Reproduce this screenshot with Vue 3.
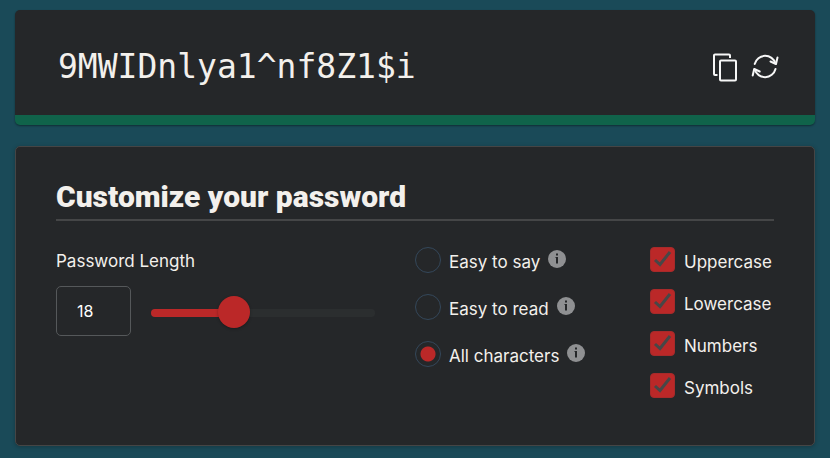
<script setup>
import { computed, ref } from 'vue'

const password = ref('9MWIDnlya1^nf8Z1$i')
const min = 1
const max = 50
const length = ref(18)
const mode = ref('all')

const modes = [
  { id: 'say', label: 'Easy to say' },
  { id: 'read', label: 'Easy to read' },
  { id: 'all', label: 'All characters' },
]

const sets = ref([
  { id: 'upper', label: 'Uppercase', on: true, chars: 'ABCDEFGHIJKLMNOPQRSTUVWXYZ' },
  { id: 'lower', label: 'Lowercase', on: true, chars: 'abcdefghijklmnopqrstuvwxyz' },
  { id: 'numbers', label: 'Numbers', on: true, chars: '0123456789' },
  { id: 'symbols', label: 'Symbols', on: true, chars: '!@#$%^&*' },
])

const fill = computed(() => `${((length.value - min) / (max - min)) * 100}%`)

function generate() {
  const pool = sets.value.filter((s) => s.on).map((s) => s.chars).join('')
  if (!pool) return
  const picks = crypto.getRandomValues(new Uint32Array(Number(length.value)))
  password.value = Array.from(picks, (n) => pool[n % pool.length]).join('')
}

function copy() {
  navigator.clipboard?.writeText(password.value)
}
</script>

<template>
  <main class="page">
    <section class="result">
      <output class="password">{{ password }}</output>
      <div class="actions">
        <button type="button" class="action" aria-label="Copy password" @click="copy">
          <svg viewBox="0 0 28 30" width="28" height="30" fill="none" stroke="currentColor" stroke-width="2" stroke-linejoin="round">
            <path d="M5.500 23H3a1 1 0 0 1-1-1V3.500a1 1 0 0 1 1-1h14a1 1 0 0 1 1 1V6" />
            <rect x="8" y="8.500" width="16" height="20" rx="1" />
          </svg>
        </button>
        <button type="button" class="action" aria-label="Generate password" @click="generate">
          <svg viewBox="0 0 28 30" width="28" height="30" fill="none" stroke="currentColor" stroke-width="2" stroke-linejoin="round" stroke-linecap="round">
            <path d="M3.700 12A10.800 10.800 0 0 1 24.500 11.500" />
            <path d="M19.500 9.500l5.500 2.500 1.500-6.500" />
            <path d="M24.500 17A10.800 10.800 0 0 1 3.700 17.500" />
            <path d="M8.700 19.500l-5.500-2.500-1.500 6.500" />
          </svg>
        </button>
      </div>
    </section>

    <section class="panel">
      <h2 class="title">Customize your password</h2>
      <div class="columns">
        <div class="length">
          <label class="caption" for="length">Password Length</label>
          <div class="length-row">
            <input id="length" v-model="length" class="number" type="text" inputmode="numeric" />
            <input v-model="length" class="range" type="range" :min="min" :max="max" aria-label="Password Length" :style="{ '--fill': fill }" />
          </div>
        </div>

        <div class="modes">
          <div v-for="m in modes" :key="m.id" class="mode">
            <input :id="m.id" v-model="mode" class="radio" type="radio" name="mode" :value="m.id" />
            <label class="text" :for="m.id">{{ m.label }}</label>
            <svg class="info" viewBox="0 0 18 18" width="18" height="18">
              <circle cx="9" cy="9" r="9" fill="#8f9092" />
              <path d="M8 3.500h2v2H8zM7.500 7H10v6.500H8V8h-.5z" fill="#252729" />
            </svg>
          </div>
        </div>

        <div class="sets">
          <div v-for="s in sets" :key="s.id" class="set">
            <span class="box">
              <input :id="s.id" v-model="s.on" class="check" type="checkbox" />
              <svg v-if="s.on" class="tick" viewBox="0 0 25 25" width="25" height="25">
                <path d="M5 13l5 4.500L20 5" fill="none" stroke="#474747" stroke-width="3" />
              </svg>
            </span>
            <label class="text" :for="s.id">{{ s.label }}</label>
          </div>
        </div>
      </div>
    </section>
  </main>
</template>

<style>
body {
  margin: 0;
  background: #1a4a58;
}
</style>

<style scoped>
* {
  box-sizing: border-box;
}

.page {
  display: flex;
  flex-direction: column;
  gap: 21px;
  padding: 10px 15px 12px;
  color: #f3f0ec;
  font-family: Inter, "Liberation Sans", sans-serif;
  font-size: 17px;
  line-height: 24px;
}

.result {
  display: flex;
  align-items: center;
  justify-content: space-between;
  padding: 37px 36px 28px 43px;
  background: #252729;
  border-bottom: 10px solid #10634a;
  border-radius: 5px;
  box-shadow: 0 1px 2px rgba(0, 0, 0, 0.4);
}

.password {
  font-family: "DejaVu Sans Mono", monospace;
  font-size: 33px;
  line-height: 40px;
}

.actions {
  display: flex;
  gap: 11px;
}

.action {
  display: block;
  padding: 0;
  border: 0;
  background: none;
  color: #f7f7f7;
  cursor: pointer;
}

.action svg {
  display: block;
}

.panel {
  padding: 32px 40px 46px;
  background: #252729;
  border: 1px solid #454545;
  border-radius: 5px;
  box-shadow: 0 1px 4px rgba(0, 0, 0, 0.25);
}

.title {
  margin: 0 0 26px;
  padding-bottom: 4px;
  border-bottom: 2px solid #454647;
  font-family: Roboto, sans-serif;
  font-size: 30px;
  font-weight: 900;
  line-height: 36px;
}

.columns {
  display: grid;
  grid-template-columns: 359fr 235fr 124fr;
}

.length {
  display: flex;
  flex-direction: column;
  gap: 13px;
  padding: 2px 40px 0 0;
}

.length-row {
  display: flex;
  align-items: center;
  gap: 20px;
}

.number {
  width: 75px;
  height: 50px;
  padding: 0 20px;
  border: 1px solid #55585a;
  border-radius: 5px;
  background: transparent;
  color: #fff;
  font: inherit;
  font-size: 16px;
}

.range {
  flex: 1;
  min-width: 0;
  height: 32px;
  margin: 4px 0 0;
  appearance: none;
  background: transparent;
}

.range::-webkit-slider-runnable-track {
  height: 8px;
  border-radius: 4px;
  background: linear-gradient(to right, #bb2828 var(--fill), #2b2e2f var(--fill));
}

.range::-webkit-slider-thumb {
  width: 32px;
  height: 32px;
  margin-top: -13px;
  appearance: none;
  border-radius: 50%;
  background: #bb2828;
  box-shadow: 0 1px 3px rgba(0, 0, 0, 0.3);
}

.modes {
  display: flex;
  flex-direction: column;
  gap: 21px;
}

.mode {
  display: flex;
  align-items: center;
  gap: 8px;
}

.radio {
  width: 26px;
  height: 26px;
  margin: 0;
  appearance: none;
  border: 1px solid #34475a;
  border-radius: 50%;
}

.radio:checked {
  background: radial-gradient(circle, #bb2828 7px, transparent 8px);
}

.text {
  padding-top: 4px;
  line-height: 22px;
  white-space: nowrap;
}

.info {
  margin-bottom: 2px;
}

.sets {
  display: flex;
  flex-direction: column;
  gap: 16px;
}

.set {
  display: flex;
  align-items: flex-start;
  gap: 9px;
}

.box {
  display: grid;
}

.check,
.tick {
  grid-area: 1 / 1;
}

.check {
  width: 25px;
  height: 25px;
  margin: 0;
  appearance: none;
  border: 1px solid #a72a2a;
  border-radius: 4px;
}

.check:checked {
  background: #bb2828;
}

.tick {
  pointer-events: none;
}
</style>
